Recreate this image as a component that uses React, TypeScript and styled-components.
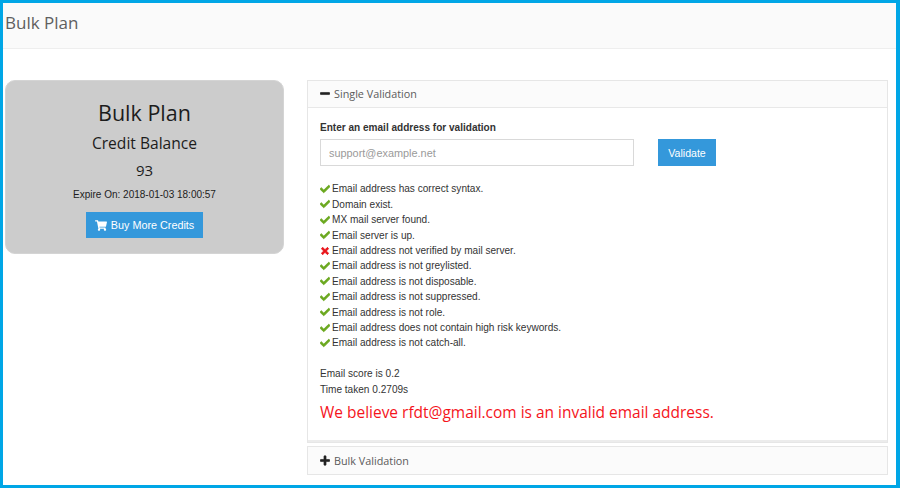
import React from "react";
import styled, { createGlobalStyle } from "styled-components";
import { FaCheck, FaMinus, FaPlus, FaShoppingCart, FaTimes } from "react-icons/fa";

const GlobalStyle = createGlobalStyle`
  html, body {
    margin: 0;
    padding: 0;
    background: #fff;
  }
  * {
    box-sizing: border-box;
  }
`;

const Frame = styled.div`
  width: 900px;
  height: 488px;
  border: 3px solid #00a6e6;
  border-right-width: 4px;
  background: #fff;
  overflow: hidden;
  font-family: "Liberation Sans", Arial, sans-serif;
  color: #333;
`;

const PageHeader = styled.header`
  height: 46px;
  padding-left: 2px;
  display: flex;
  align-items: center;
  padding-bottom: 7px;
  background: #fafafa;
  border-bottom: 1px solid #eeeeee;
`;

const PageTitle = styled.h1`
  margin: 0;
  font-family: "Open Sans", sans-serif;
  font-size: 17px;
  font-weight: 400;
  color: #5f5f5f;
`;

const Content = styled.main`
  display: flex;
  align-items: flex-start;
  gap: 23px;
  padding: 31px 8px 0 2px;
`;

const PlanCard = styled.section`
  width: 279px;
  height: 174px;
  padding-top: 18px;
  flex: none;
  display: flex;
  flex-direction: column;
  align-items: center;
  background: #cccccc;
  border: 1px solid #d4d4d4;
  border-radius: 10px;
  color: #1c1c1c;
`;

const PlanName = styled.h2`
  margin: 0;
  font-family: "Open Sans", sans-serif;
  font-size: 21.5px;
  line-height: 28px;
  font-weight: 400;
`;

const PlanLabel = styled.div`
  margin-top: 6px;
  font-family: "Open Sans", sans-serif;
  font-size: 15.6px;
  line-height: 20px;
`;

const PlanCredits = styled.div`
  margin-top: 7px;
  font-family: "Open Sans", sans-serif;
  font-size: 15px;
  line-height: 20px;
`;

const PlanExpiry = styled.div`
  margin-top: 8px;
  font-size: 10px;
  line-height: 14px;
`;

const Button = styled.button`
  display: inline-flex;
  align-items: center;
  justify-content: center;
  gap: 3px;
  height: 27px;
  padding: 0 10px;
  border: 1px solid #3498db;
  border-radius: 0;
  background: #3498db;
  color: #fff;
  font-family: "Liberation Sans", Arial, sans-serif;
  font-size: 10.6px;
  white-space: nowrap;
`;

const BuyButton = styled(Button)`
  margin-top: 10px;
  width: 117px;
  height: 26px;
  gap: 4px;
  font-size: 10.8px;
  svg {
    flex: none;
    width: 12px;
    height: 11px;
  }
`;

const ValidateButton = styled(Button)`
  width: 58px;
  padding: 0;
`;

const Accordion = styled.div`
  flex: 1;
  display: flex;
  flex-direction: column;
  gap: 3px;
`;

const Panel = styled.section`
  border: 1px solid #e6e6e6;
`;

const PanelHeader = styled.div<{ $open?: boolean }>`
  height: 27px;
  display: flex;
  align-items: center;
  gap: 4px;
  padding-left: 12px;
  background: #fbfbfb;
  border-bottom: ${(p) => (p.$open ? "1px solid #e8e8e8" : "none")};
  font-family: "Open Sans", sans-serif;
  font-size: 10.8px;
  color: #5a5a5a;
  padding-bottom: 1px;
  svg {
    color: #222;
    width: 10px;
    height: 11px;
    stroke: currentColor;
    stroke-width: 30px;
  }
`;

const PanelBody = styled.div`
  height: 334px;
  padding: 13px 12px 0;
  border-bottom: 2px solid #ececec;
`;

const FieldLabel = styled.label`
  display: block;
  font-size: 10.05px;
  line-height: 14px;
  font-weight: 700;
  color: #333;
`;

const FormRow = styled.div`
  display: flex;
  align-items: center;
  gap: 24px;
  margin-top: 4px;
`;

const EmailInput = styled.input`
  width: 314px;
  height: 27px;
  padding: 0 8px;
  border: 1px solid #d9d9d9;
  border-radius: 0;
  background: #fff;
  font-family: "Liberation Sans", Arial, sans-serif;
  font-size: 10.9px;
  &::placeholder {
    color: #9a9a9a;
  }
`;

const CheckList = styled.ul`
  margin: 15.3px 0 0;
  padding: 0;
  list-style: none;
`;

const CheckItem = styled.li`
  display: flex;
  align-items: center;
  gap: 2px;
  height: 15.4px;
  font-size: 10.08px;
`;

const CheckIcon = styled(FaCheck)`
  width: 10px;
  height: 10px;
  color: #6aa81e;
  stroke: currentColor;
  stroke-width: 40px;
`;

const CrossIcon = styled(FaTimes)`
  width: 10px;
  height: 10px;
  color: #e8141b;
  stroke: currentColor;
  stroke-width: 50px;
`;

const Stats = styled.div`
  margin-top: 15.7px;
  font-size: 10.08px;
  line-height: 15.4px;
`;

const Verdict = styled.p`
  margin: 5px 0 0;
  font-family: "Open Sans", sans-serif;
  font-size: 15.47px;
  line-height: 20px;
  color: #f5141c;
`;

const checks = [
  { text: "Email address has correct syntax.", ok: true },
  { text: "Domain exist.", ok: true },
  { text: "MX mail server found.", ok: true },
  { text: "Email server is up.", ok: true },
  { text: "Email address not verified by mail server.", ok: false },
  { text: "Email address is not greylisted.", ok: true },
  { text: "Email address is not disposable.", ok: true },
  { text: "Email address is not suppressed.", ok: true },
  { text: "Email address is not role.", ok: true },
  { text: "Email address does not contain high risk keywords.", ok: true },
  { text: "Email address is not catch-all.", ok: true },
];

const App: React.FC = () => {
  return (
    <Frame>
      <GlobalStyle />
      <PageHeader>
        <PageTitle>Bulk Plan</PageTitle>
      </PageHeader>
      <Content>
        <PlanCard>
          <PlanName>Bulk Plan</PlanName>
          <PlanLabel>Credit Balance</PlanLabel>
          <PlanCredits>93</PlanCredits>
          <PlanExpiry>Expire On: 2018-01-03 18:00:57</PlanExpiry>
          <BuyButton>
            <FaShoppingCart /> Buy More Credits
          </BuyButton>
        </PlanCard>
        <Accordion>
          <Panel>
            <PanelHeader $open>
              <FaMinus /> Single Validation
            </PanelHeader>
            <PanelBody>
              <FieldLabel>Enter an email address for validation</FieldLabel>
              <FormRow>
                <EmailInput placeholder="support@example.net" />
                <ValidateButton>Validate</ValidateButton>
              </FormRow>
              <CheckList>
                {checks.map((c) => (
                  <CheckItem key={c.text}>
                    {c.ok ? <CheckIcon /> : <CrossIcon />}
                    {c.text}
                  </CheckItem>
                ))}
              </CheckList>
              <Stats>
                Email score is 0.2
                <br />
                Time taken 0.2709s
              </Stats>
              <Verdict>We believe rfdt@gmail.com is an invalid email address.</Verdict>
            </PanelBody>
          </Panel>
          <Panel>
            <PanelHeader>
              <FaPlus /> Bulk Validation
            </PanelHeader>
          </Panel>
        </Accordion>
      </Content>
    </Frame>
  );
};

export default App;
